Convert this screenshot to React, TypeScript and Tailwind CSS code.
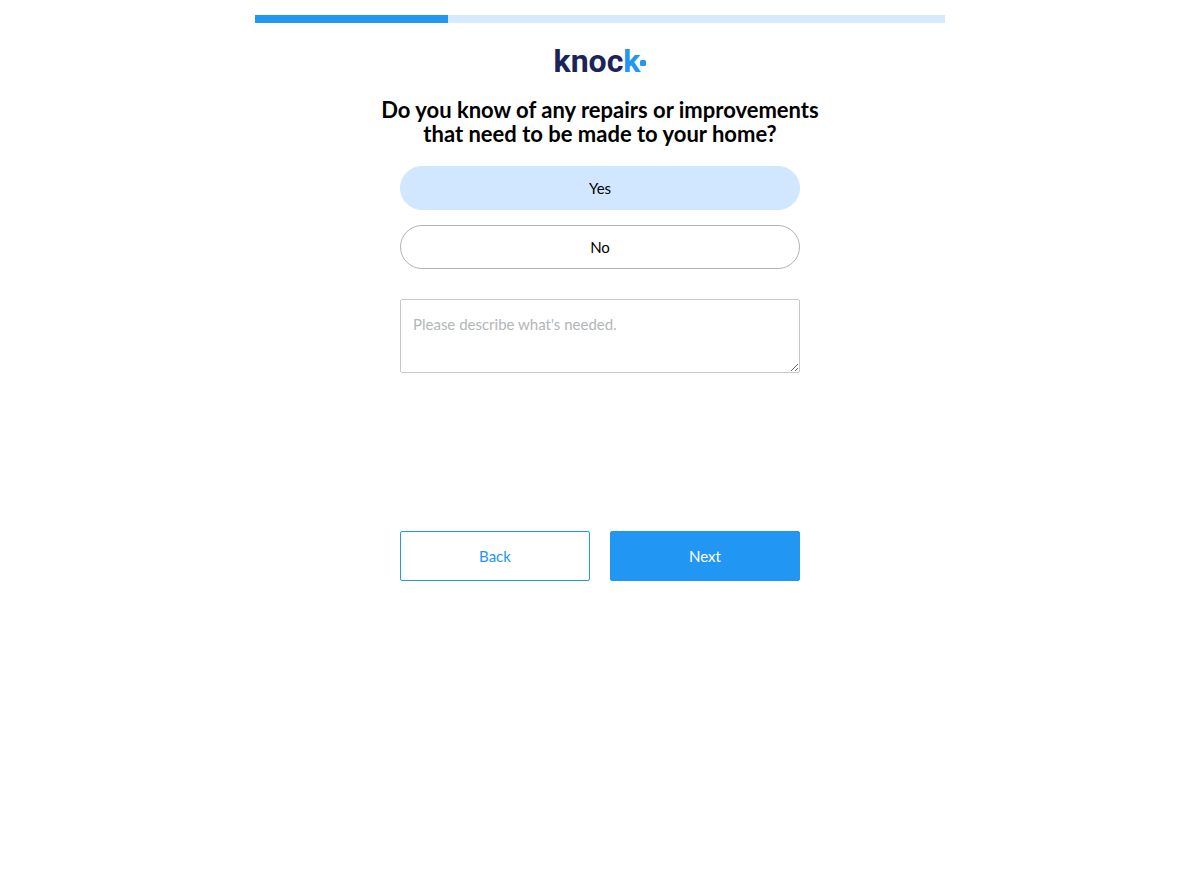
import { useState } from 'react';

function KnockLogo() {
  return (
    <div className="flex h-[26px] items-center justify-center" aria-label="knock" role="img">
      <span className="font-['Roboto',sans-serif] text-[32px] leading-6 font-bold text-[#1a2456]">
        knoc<span className="text-[#2196f3]">k</span>
      </span>
      <svg className="mt-1 size-[6px]" viewBox="0 0 6 6" aria-hidden="true">
        <rect width="6" height="6" rx="1.5" fill="#2196f3" />
      </svg>
    </div>
  );
}

const choices = ['Yes', 'No'];

export default function App() {
  const [choice, setChoice] = useState('Yes');

  return (
    <main className="mx-auto max-w-[690px] pt-[15px] font-['Lato',sans-serif] text-[15px] text-black">
      <div
        className="h-2 bg-[#d6eafd]"
        role="progressbar"
        aria-label="Progress"
        aria-valuenow={28}
        aria-valuemin={0}
        aria-valuemax={100}
      >
        <div className="h-full w-[28%] bg-[#2196f3]" />
      </div>

      <header className="pt-[25px]">
        <KnockLogo />
        <h1 className="mx-auto mt-6 max-w-[460px] text-center text-[22px] leading-6 font-bold">
          Do you know of any repairs or improvements that need to be made to your home?
        </h1>
      </header>

      <form className="mx-auto mt-5 max-w-[400px]" onSubmit={(e) => e.preventDefault()}>
        <div className="flex flex-col gap-[15px]">
          {choices.map((label) => (
            <button
              key={label}
              type="button"
              aria-pressed={choice === label}
              onClick={() => setChoice(label)}
              className={
                choice === label
                  ? 'h-11 w-full rounded-full border border-[#d1e7ff] bg-[#d1e7ff]'
                  : 'h-11 w-full rounded-full border border-[#b0b3b5] bg-white'
              }
            >
              {label}
            </button>
          ))}
        </div>

        <textarea
          aria-label="Repairs or improvements needed"
          placeholder="Please describe what's needed."
          className="mt-[30px] block h-[74px] w-full resize rounded-xs border border-[#c8c8c8] bg-white p-3 leading-6 placeholder:text-[#b2b6b8]"
        />

        <div className="mt-[158px] grid grid-cols-2 gap-5">
          <button type="button" className="h-[50px] rounded-xs border border-[#2196f3] bg-white text-[#2196f3]">
            Back
          </button>
          <button type="submit" className="h-[50px] rounded-xs border border-[#2196f3] bg-[#2196f3] text-white">
            Next
          </button>
        </div>
      </form>
    </main>
  );
}
